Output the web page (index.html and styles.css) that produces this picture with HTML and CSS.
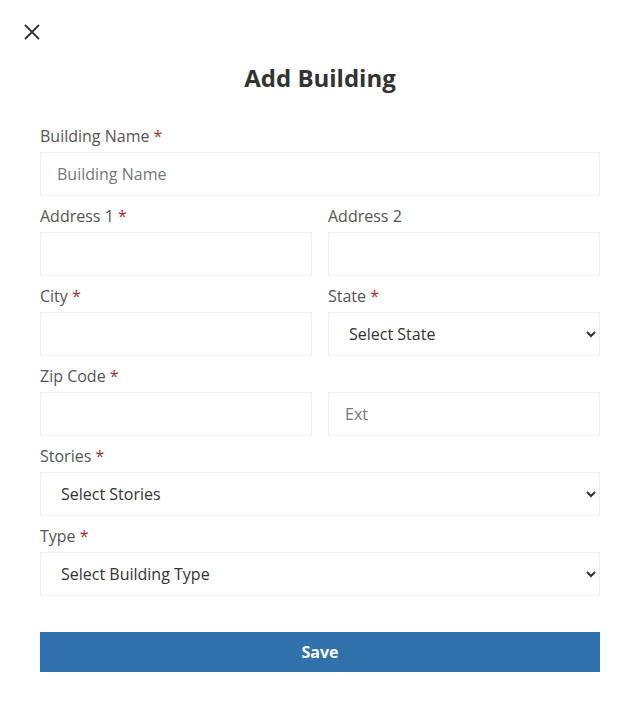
FILE: index.html
```html
<!DOCTYPE html>
<html lang="en">
<head>
<meta charset="utf-8">
<title>Add Building</title>
<link rel="stylesheet" href="styles.css">
</head>
<body>
<div class="modal">
  <button class="close" type="button" aria-label="Close">
    <svg width="16" height="16" viewBox="0 0 16 16"><path d="M1 1L15 15M15 1L1 15" stroke="#333" stroke-width="1.8" fill="none"/></svg>
  </button>
  <h1 class="title">Add Building</h1>
  <form class="form">
    <div class="field">
      <label class="label">Building Name <span class="req">*</span></label>
      <input class="input" type="text" placeholder="Building Name">
    </div>
    <div class="row">
      <div class="field">
        <label class="label">Address 1 <span class="req">*</span></label>
        <input class="input" type="text">
      </div>
      <div class="field">
        <label class="label">Address 2</label>
        <input class="input" type="text">
      </div>
    </div>
    <div class="row">
      <div class="field">
        <label class="label">City <span class="req">*</span></label>
        <input class="input" type="text">
      </div>
      <div class="field">
        <label class="label">State <span class="req">*</span></label>
        <select class="input select"><option>Select State</option></select>
      </div>
    </div>
    <div class="row">
      <div class="field">
        <label class="label">Zip Code <span class="req">*</span></label>
        <input class="input" type="text">
      </div>
      <div class="field field-end">
        <input class="input" type="text" placeholder="Ext">
      </div>
    </div>
    <div class="field">
      <label class="label">Stories <span class="req">*</span></label>
      <select class="input select"><option>Select Stories</option></select>
    </div>
    <div class="field">
      <label class="label">Type <span class="req">*</span></label>
      <select class="input select"><option>Select Building Type</option></select>
    </div>
    <button class="save" type="button">Save</button>
  </form>
</div>
</body>
</html>
```

FILE: styles.css
```css
* { box-sizing: border-box; }
html, body {
  margin: 0;
  padding: 0;
  background: #fff;
  font-family: "Open Sans", "Liberation Sans", sans-serif;
  color: #333;
}
.modal {
  width: 640px;
  padding: 24px 40px 0 40px;
  position: relative;
}
.close {
  position: absolute;
  left: 24px;
  top: 24px;
  width: 16px;
  height: 16px;
  padding: 0;
  border: 0;
  background: none;
  display: block;
}
.close svg { display: block; }
.title {
  margin: 40px 0 0 0;
  text-align: center;
  font-size: 24px;
  line-height: 30px;
  font-weight: 700;
  color: #333;
  height: 30px;
  transform: translateY(-1px);
}
.form {
  margin-top: 30px;
  display: flex;
  flex-direction: column;
}
.row {
  display: grid;
  grid-template-columns: 1fr 1fr;
  column-gap: 16px;
}
.field {
  display: flex;
  flex-direction: column;
  margin-bottom: 8px;
}
.field-end { justify-content: flex-end; }
.label {
  font-size: 16px;
  line-height: 24px;
  color: #555;
  margin-bottom: 4px;
}
.req { color: #a0302a; }
.input {
  height: 44px;
  width: 100%;
  border: 1px solid #f0f0f0;
  background: #fff;
  padding: 0 16px;
  font-family: "Open Sans", "Liberation Sans", sans-serif;
  font-size: 16px;
  color: #333;
  border-radius: 0;
  outline: none;
}
.input::placeholder { color: #777; }
.select {
  padding: 0 4px 0 16px;
  color: #333;
}
.save {
  margin-top: 28px;
  height: 40px;
  width: 100%;
  border: 0;
  background: #2f71ab;
  color: #fff;
  font-family: "Open Sans", "Liberation Sans", sans-serif;
  font-size: 16px;
  font-weight: 700;
}
```
